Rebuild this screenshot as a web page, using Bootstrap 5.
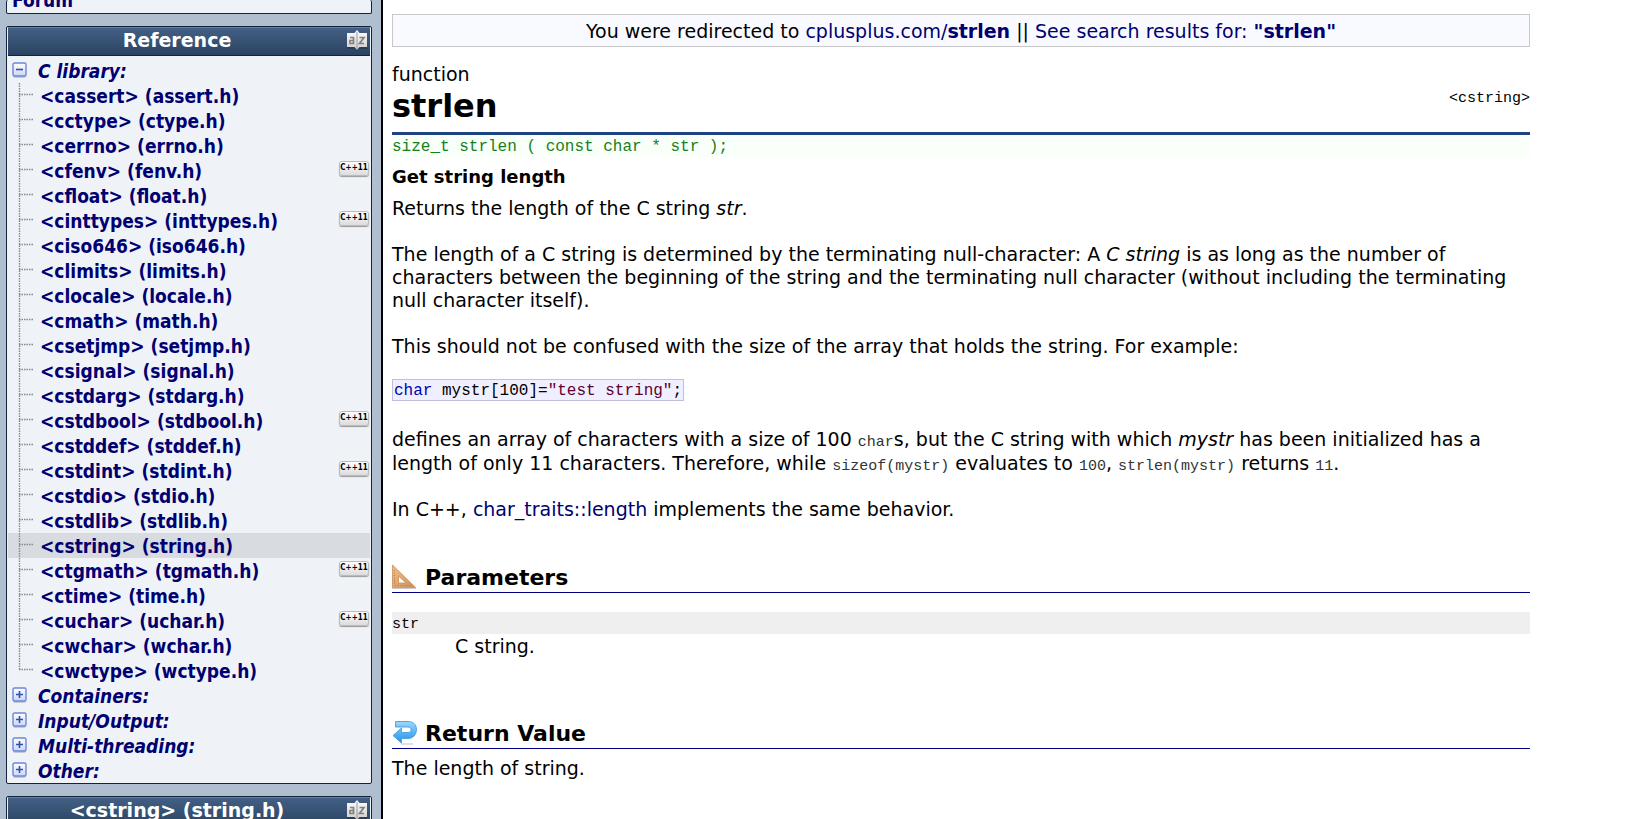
<!DOCTYPE html>
<html lang="en">
<head>
<meta charset="utf-8">
<meta name="viewport" content="width=device-width, initial-scale=1">
<title>strlen - C++ Reference</title>
<link href="https://cdn.jsdelivr.net/npm/bootstrap@5.3.0/dist/css/bootstrap.min.css" rel="stylesheet">
<style>
  body { font-family: "DejaVu Sans", Verdana, sans-serif; font-size: 19px; line-height: 23px; color: #000; background: #fff; }
  a { color: #000070; text-decoration: none; }
  a:hover { text-decoration: underline; }
  b, strong { font-weight: 700; }
  code { font-family: "Liberation Mono", "Courier New", monospace; font-size: 15px; line-height: 16px; color: #333; }

  .page { height: 100vh; }

  .side { flex: 0 0 383px; background: #afbfd0; border-right: 2px solid #000; padding: 0 9px 0 6px; font-family: "DejaVu Sans Condensed", "DejaVu Sans", sans-serif; font-weight: 700; line-height: 25px; }
  .panel { background: #eff3f8; border: 1px solid #12233a; border-radius: 2px; padding: 0 1px; margin-bottom: 12px; }
  .panel-above { height: 14px; overflow: hidden; border-top: 0; padding-left: 5px; }
  .panel-title { height: 29px; padding-right: 2px; background: linear-gradient(#426085, #2b4361); border-top: 1px solid #5f83a8; border-bottom: 1px solid #12233a; }
  .panel-title h2 { font-family: "DejaVu Sans", Verdana, sans-serif; font-size: 19px; line-height: 25px; font-weight: 700; color: #fff; margin: 0; }
  .panel-title svg { margin-top: 2px; }
  .tree-list { list-style: none; margin: 0; padding: 0; }
  .panel > .tree-list { padding-top: 2px; line-height: 27px; }
  .tree-head { font-style: italic; height: 25px; }
  .toggle { border: 0; background: none; padding: 4px 0 0 4px; width: 30px; height: 25px; display: flex; align-items: flex-start; }
  .leaf { display: flex; height: 25px; }
  .leaf.current { background: #d8dbe0; }
  .leaf svg { flex: 0 0 32px; }
  .chip { margin: 3px 1px 0 auto; width: 30px; height: 15px; border: 1px solid #bbb; border-radius: 3px; background: linear-gradient(#fff, #dcdcdc); box-shadow: 0 1px 1px #999; color: #000; font: 700 8px/12px "DejaVu Sans Condensed", sans-serif; text-align: center; }

  .main-col { flex: 1 1 0; min-width: 0; padding: 14px 9px 0; }
  .doc { max-width: 1138px; }
  .notice { border: 1px solid #c8c8c8; background: #f9faff; text-align: center; padding: 4px 0 3px; line-height: 24px; }
  .doc-title { border-bottom: 3px solid #1e4382; padding: 16px 0 5px; }
  .doc-title h1 { font-size: 32px; line-height: 41px; font-weight: 700; margin: 0; }
  .doc-title a code { color: #000; }
  .proto, .sample, .params dt { font-family: "Liberation Mono", "Courier New", monospace; font-size: 16px; padding-top: 2px; line-height: 20px; }
  .proto code, .sample code { font-size: 16px; color: inherit; }
  .proto { background: #f9fff9; color: #17801b; margin-bottom: 9px; }
  .brief { font-size: 18px; font-weight: 700; line-height: 22px; margin-bottom: 9px; }
  .doc p { margin: 0 0 23px; }
  .doc p.with-code { line-height: 24px; }
  .sample { border: 1px solid #bfbfd8; background: #efefff; padding: 2px 1px 0; width: fit-content; margin: -2px 0 26px; line-height: 18px; }
  .sample .kw { color: #0000b0; }
  .sample .str { color: #600030; }
  .sec-title { border-bottom: 1px solid #000080; height: 29px; gap: 8px; }
  .sec-title h2 { font-size: 22px; line-height: 28px; font-weight: 700; margin: 0; }
  .sec-first { padding-top: 20px; }
  .params { margin: 19px 0 62px; }
  .params dt { background: #efefef; font-weight: 400; }
  .params dt code { color: #000; }
  .params dd { margin: 0 0 0 63px; line-height: 24px; }
</style>
</head>
<body>
<svg width="0" height="0" class="position-absolute" aria-hidden="true">
  <defs>
    <linearGradient id="g-btn" x1="0" y1="0" x2="0" y2="1"><stop offset="0" stop-color="#fff"/><stop offset="1" stop-color="#ccd6f4"/></linearGradient>
    <linearGradient id="g-book" x1="0" y1="0" x2="0" y2="1"><stop offset="0" stop-color="#fff"/><stop offset="1" stop-color="#ccc"/></linearGradient>
    <symbol id="i-box" viewBox="0 0 15 16"><rect x="1" y="2" width="13" height="14" rx="2" fill="#c3cad6"/><rect x="1" y="1" width="13" height="13" rx="1.5" fill="url(#g-btn)" stroke="#6c86dc" stroke-width="1.4"/></symbol>
    <symbol id="i-minus" viewBox="0 0 15 16"><use href="#i-box"/><path d="M4 7.5h7" stroke="#2f4fae" stroke-width="1.6"/></symbol>
    <symbol id="i-plus" viewBox="0 0 15 16"><use href="#i-box"/><path d="M4 7.5h7M7.5 4v7" stroke="#2f4fae" stroke-width="1.6"/></symbol>
    <symbol id="i-branch" viewBox="0 0 32 25"><path d="M11.5 0v25M11 11.5h14" stroke="#888" stroke-width="1.4" stroke-dasharray="1.5 1"/></symbol>
    <symbol id="i-end" viewBox="0 0 32 25"><path d="M11.5 0v11M11 11.5h14" stroke="#888" stroke-width="1.4" stroke-dasharray="1.5 1"/></symbol>
    <symbol id="i-book" viewBox="0 0 22 22"><path d="M1 4h8l2-3 2 3h8v15h-8l-2 2.5L9 19H1z" fill="#1d2e45" opacity=".5"/><path d="M1 3h7.5L11 0l2.500 3H21v14h-7.500L11 20l-2.500-3H1z" fill="url(#g-book)"/><path d="M11 2v17" stroke="#999"/><path d="M4 7.500h3.500v6H4v-3h3.500M13.500 7.500h4.500l-4.500 6h4.500" fill="none" stroke="#808080" stroke-width="1.700"/></symbol>
  </defs>
</svg>

<div class="page d-flex overflow-hidden">
  <nav class="side" aria-label="Reference navigation">
    <section class="panel panel-above d-flex align-items-end"><a href="#">Forum</a></section>

    <section class="panel">
      <div class="panel-title d-flex align-items-start">
        <h2 class="flex-fill text-center">Reference</h2>
        <a href="#" aria-label="Index" class="d-flex"><svg width="22" height="22"><use href="#i-book"/></svg></a>
      </div>
      <ul class="tree-list">
        <li>
          <div class="tree-head d-flex"><button class="toggle" type="button" aria-label="Collapse"><svg width="15" height="16"><use href="#i-minus"/></svg></button><a href="#">C library:</a></div>
          <ul class="tree-list" id="headers"></ul>
        </li>
        <li class="tree-head d-flex"><button class="toggle" type="button" aria-label="Expand"><svg width="15" height="16"><use href="#i-plus"/></svg></button><a href="#">Containers:</a></li>
        <li class="tree-head d-flex"><button class="toggle" type="button" aria-label="Expand"><svg width="15" height="16"><use href="#i-plus"/></svg></button><a href="#">Input/Output:</a></li>
        <li class="tree-head d-flex"><button class="toggle" type="button" aria-label="Expand"><svg width="15" height="16"><use href="#i-plus"/></svg></button><a href="#">Multi-threading:</a></li>
        <li class="tree-head d-flex"><button class="toggle" type="button" aria-label="Expand"><svg width="15" height="16"><use href="#i-plus"/></svg></button><a href="#">Other:</a></li>
      </ul>
    </section>

    <section class="panel">
      <div class="panel-title d-flex align-items-start">
        <h2 class="flex-fill text-center">&lt;cstring&gt; (string.h)</h2>
        <a href="#" aria-label="Index" class="d-flex"><svg width="22" height="22"><use href="#i-book"/></svg></a>
      </div>
    </section>
  </nav>

  <main class="main-col">
    <div class="doc">
      <div class="notice">You were redirected to <a href="#">cplusplus.com/<b>strlen</b></a> || <a href="#">See search results for: <b>"strlen"</b></a></div>

      <header class="doc-title d-flex justify-content-between align-items-center">
        <div>
          <div>function</div>
          <h1>strlen</h1>
        </div>
        <a href="#"><code>&lt;cstring&gt;</code></a>
      </header>
      <div class="proto"><code>size_t strlen ( const char * str );</code></div>
      <div class="brief">Get string length</div>

      <p>Returns the length of the C string <i>str</i>.</p>
      <p>The length of a C string is determined by the terminating null-character: A <i>C string</i> is as long as the number of characters between the beginning of the string and the terminating null character (without including the terminating null character itself).</p>
      <p>This should not be confused with the size of the array that holds the string. For example:</p>
      <div class="sample"><code><span class="kw">char</span> mystr[100]=<span class="str">"test string"</span>;</code></div>
      <p class="with-code">defines an array of characters with a size of 100 <code>char</code>s, but the C string with which <i>mystr</i> has been initialized has a length of only 11 characters. Therefore, while <code>sizeof(mystr)</code> evaluates to <code>100</code>, <code>strlen(mystr)</code> returns <code>11</code>.</p>
      <p>In C++, <a href="#">char_traits::length</a> implements the same behavior.</p>

      <section class="sec-first">
        <div class="sec-title d-flex">
          <svg width="25" height="25" viewBox="0 0 25 25" aria-hidden="true">
            <defs><linearGradient id="g-wood" x1="0" y1="0" x2="1" y2="1"><stop offset="0" stop-color="#efbf8c"/><stop offset="1" stop-color="#cf9158"/></linearGradient></defs>
            <path d="M0 24.500h24" stroke="#ccc"/>
            <path d="M.5 1 23.500 23.500H.5zM6.500 12v7H14z" fill="url(#g-wood)" fill-rule="evenodd" stroke="#c98c55" stroke-width=".8"/>
            <path d="M3 21.500h16M2.500 6v14" stroke="#b9783f" stroke-dasharray="1 1.500"/>
          </svg>
          <h2>Parameters</h2>
        </div>
        <dl class="params">
          <dt><code>str</code></dt>
          <dd>C string.</dd>
        </dl>
      </section>

      <section>
        <div class="sec-title d-flex">
          <svg width="25" height="25" viewBox="0 0 25 25" aria-hidden="true">
            <defs><linearGradient id="g-arrow" x1="0" y1="0" x2="0" y2="1"><stop offset="0" stop-color="#9bd8fb"/><stop offset=".5" stop-color="#5db5f0"/><stop offset="1" stop-color="#2a8fe0"/></linearGradient></defs>
            <path d="M9 24h12" stroke="#bbb" stroke-width="1.500" opacity=".6"/>
            <path d="M3.500 1.500H16c5 0 8.500 3 8.500 8s-3.500 9-8.500 9H9.500V23L1 15.500 9.500 8v4.500H16c2 0 3-1.300 3-3s-1-2.500-3-2.500H3.500z" fill="url(#g-arrow)" stroke="#3f9fe6" stroke-width=".9" stroke-linejoin="round"/>
          </svg>
          <h2>Return Value</h2>
        </div>
        <p class="pt-2">The length of string.</p>
      </section>
    </div>
  </main>
</div>
<script>
  // name, C header, added in C++11
  const headers = [
    ["cassert", "assert.h"], ["cctype", "ctype.h"], ["cerrno", "errno.h"], ["cfenv", "fenv.h", 1],
    ["cfloat", "float.h"], ["cinttypes", "inttypes.h", 1], ["ciso646", "iso646.h"], ["climits", "limits.h"],
    ["clocale", "locale.h"], ["cmath", "math.h"], ["csetjmp", "setjmp.h"], ["csignal", "signal.h"],
    ["cstdarg", "stdarg.h"], ["cstdbool", "stdbool.h", 1], ["cstddef", "stddef.h"], ["cstdint", "stdint.h", 1],
    ["cstdio", "stdio.h"], ["cstdlib", "stdlib.h"], ["cstring", "string.h"], ["ctgmath", "tgmath.h", 1],
    ["ctime", "time.h"], ["cuchar", "uchar.h", 1], ["cwchar", "wchar.h"], ["cwctype", "wctype.h"]
  ];
  document.getElementById("headers").innerHTML = headers.map(([name, file, isNew], i) =>
    `<li class="leaf${name === "cstring" ? " current" : ""}">
      <svg width="32" height="25" aria-hidden="true"><use href="#${i === headers.length - 1 ? "i-end" : "i-branch"}"/></svg>
      <a href="#">&lt;${name}&gt; (${file})</a>${isNew ? '<span class="chip">C++11</span>' : ""}
    </li>`).join("");
</script>
<script src="https://cdn.jsdelivr.net/npm/bootstrap@5.3.0/dist/js/bootstrap.bundle.min.js"></script>
</body>
</html>
